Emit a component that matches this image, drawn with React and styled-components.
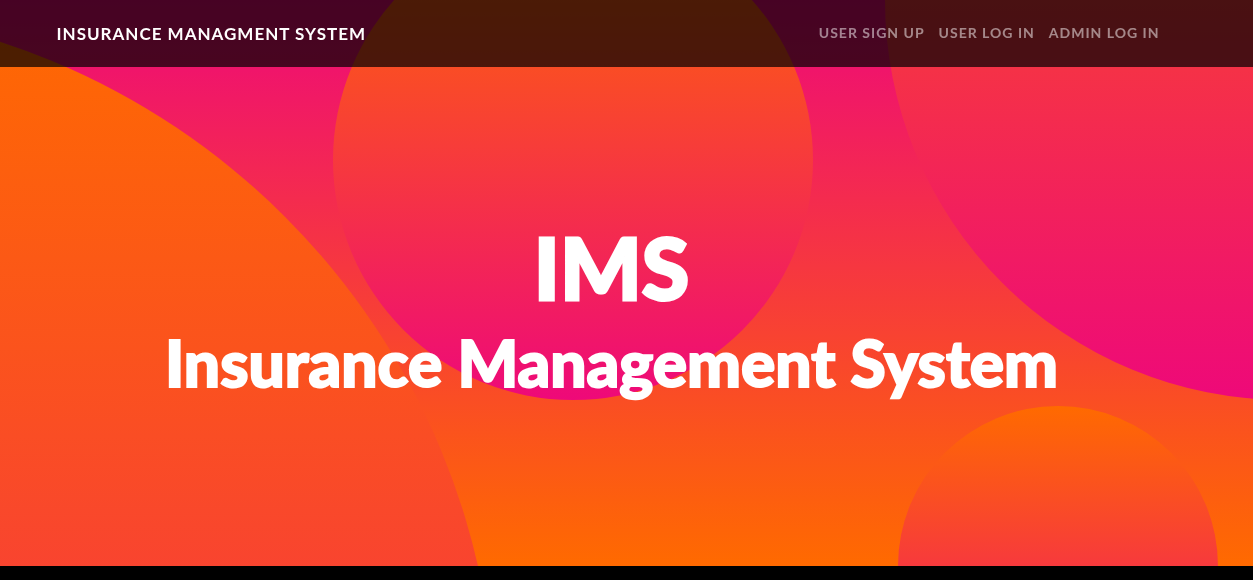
import React from "react";
import styled, { createGlobalStyle } from "styled-components";

const GlobalStyle = createGlobalStyle`
  *, *::before, *::after { box-sizing: border-box; }
  body {
    margin: 0;
    background: #000;
    color: #fff;
    font-family: Lato, "Liberation Sans", sans-serif;
  }
`;

const Container = styled.div`
  width: 100%;
  max-width: 1140px;
  margin: 0 auto;
  padding-right: 30px;
`;

const Navbar = styled.nav`
  position: fixed;
  top: 0;
  left: 0;
  right: 0;
  z-index: 2;
  padding: 16px 0;
  background: rgba(0, 0, 0, 0.7);
`;

const NavRow = styled(Container)`
  display: flex;
  flex-wrap: wrap;
  align-items: flex-start;
  justify-content: space-between;
`;

const NavAnchor = styled.a`
  font-weight: 700;
  letter-spacing: 1px;
  text-transform: uppercase;
  text-decoration: none;
`;

const Brand = styled(NavAnchor)`
  color: #fff;
  font-size: 17px;
  line-height: 35px;
`;

const NavList = styled.ul`
  display: flex;
  margin: 0;
  padding: 0;
  list-style: none;
`;

const NavLink = styled(NavAnchor)`
  display: block;
  padding: 0 7px;
  color: rgba(255, 255, 255, 0.5);
  font-size: 14px;
  line-height: 33px;
`;

const Masthead = styled.header`
  position: relative;
  overflow: hidden;
  padding: 215px 0 160px;
  background: linear-gradient(0deg, #ff6a00 0%, #ee0979 100%);
`;

const Content = styled(Container)`
  position: relative;
  z-index: 1;
  text-align: center;
`;

const Title = styled.h1`
  margin: 0;
  font-size: 86px;
  font-weight: 900;
  line-height: 104px;
  -webkit-text-stroke: 3px #fff;
`;

const Subtitle = styled.h2`
  margin: 0;
  font-size: 64px;
  font-weight: 900;
  line-height: 87px;
  -webkit-text-stroke: 2px #fff;
`;

const Circle = styled.div`
  position: absolute;
  top: ${(p) => p.$top};
  right: ${(p) => p.$right};
  bottom: ${(p) => p.$bottom};
  left: ${(p) => p.$left};
  width: ${(p) => p.$size};
  height: ${(p) => p.$size};
  border-radius: 50%;
  background: linear-gradient(0deg, #ee0979 0%, #ff6a00 100%);
`;

const links = ["User Sign Up", "User Log In", "Admin Log In"];

export default function App() {
  return (
    <>
      <GlobalStyle />
      <Navbar>
        <NavRow>
          <Brand href="#">Insurance Managment System</Brand>
          <NavList>
            {links.map((label) => (
              <li key={label}>
                <NavLink href="#">{label}</NavLink>
              </li>
            ))}
          </NavList>
        </NavRow>
      </Navbar>
      <Masthead>
        <Content>
          <Title>IMS</Title>
          <Subtitle>Insurance Management System</Subtitle>
        </Content>
        <Circle $size="1440px" $bottom="-880px" $left="-944px" />
        <Circle $size="800px" $top="-400px" $right="-432px" />
        <Circle $size="320px" $bottom="-160px" $right="35px" />
        <Circle $size="480px" $top="-80px" $right="440px" />
      </Masthead>
    </>
  );
}
